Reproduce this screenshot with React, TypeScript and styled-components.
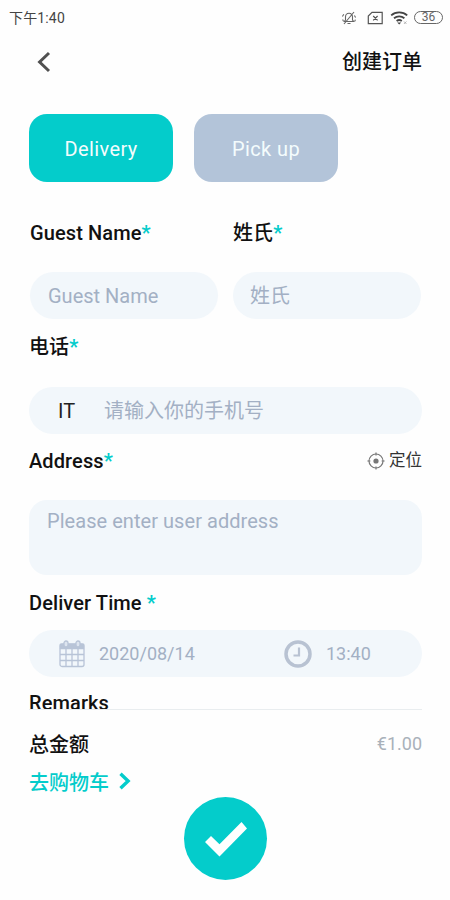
import React from "react";
import styled, { createGlobalStyle } from "styled-components";

const teal = "#04cccb";
const muted = "#a3b0c4";

const GlobalStyle = createGlobalStyle`
  * { box-sizing: border-box; }
  body {
    margin: 0;
    background: #fefefe;
    font-family: Roboto, "Noto Sans CJK SC", sans-serif;
    color: #111;
  }
`;

const Screen = styled.div`
  width: 450px;
  height: 900px;
  display: flex;
  flex-direction: column;
  overflow: hidden;
`;

const StatusBar = styled.div`
  height: 36px;
  display: flex;
  align-items: center;
  justify-content: space-between;
  padding: 0 7px 0 9px;
  font-size: 14px;
  color: #444;
`;

const StatusTime = styled.span`
  margin-top: -2px;
  letter-spacing: 0.15px;
`;

const StatusIcons = styled.div`
  display: flex;
  align-items: center;
  height: 18px;
  margin-top: -1px;
`;

const Glyph = styled.svg<{ $gap?: number }>`
  display: block;
  flex: none;
  margin-left: ${(p) => p.$gap ?? 0}px;
`;

const Battery = styled.span`
  width: 29px;
  height: 13px;
  margin-left: 5px;
  border: 1px solid #666;
  border-radius: 7px;
  font-size: 12px;
  line-height: 11px;
  text-align: center;
  color: #666;
`;

const Header = styled.header`
  height: 50px;
  display: flex;
  align-items: center;
  justify-content: space-between;
  padding: 2px 28px 0 36px;
`;

const Title = styled.h1`
  margin: 0;
  font-size: 20px;
  line-height: 30px;
  font-weight: 500;
`;

const Form = styled.main`
  height: 623px;
  flex: none;
  padding: 0 28px 0 29px;
  overflow: hidden;
`;

const Tabs = styled.div`
  display: flex;
  gap: 21px;
  padding-top: 27.5px;
`;

const Tab = styled.button<{ $active?: boolean }>`
  width: 144px;
  height: 68px;
  padding: 3px 0 0;
  border: 0;
  border-radius: 18px;
  background: ${(p) => (p.$active ? teal : "#b3c4d9")};
  color: #f4fcfd;
  font: 400 20px Roboto, sans-serif;
  letter-spacing: 0.4px;
`;

const NameRow = styled.div`
  display: grid;
  grid-template-columns: 188px 188px;
  column-gap: 15px;
  padding-left: 1px;
`;

const Label = styled.div<{ $top: number; $bottom: number }>`
  height: 30px;
  margin: ${(p) => p.$top}px 0 ${(p) => p.$bottom}px;
  font-size: 20px;
  line-height: 30px;
  font-weight: 500;
  white-space: nowrap;
  letter-spacing: 0.1px;
`;

const Star = styled.span`
  color: ${teal};
  font-weight: 700;
`;

const Field = styled.div<{ $pad?: number }>`
  height: 47px;
  display: flex;
  align-items: center;
  padding: 0 18px 0 ${(p) => p.$pad ?? 18}px;
  border-radius: 24px;
  background: #f2f7fb;
  color: ${muted};
  font-size: 20px;
  line-height: 30px;
  white-space: nowrap;
`;

const Country = styled.span`
  width: 46px;
  color: #222;
`;

const AddressBox = styled.div`
  height: 75px;
  padding: 6px 18px;
  border-radius: 18px;
  background: #f2f7fb;
  color: ${muted};
  font-size: 20px;
  line-height: 30px;
  letter-spacing: 0.05px;
`;

const LabelRow = styled.div`
  display: flex;
  align-items: flex-start;
  justify-content: space-between;
`;

const Locate = styled.div`
  display: flex;
  align-items: center;
  gap: 4px;
  height: 30px;
  margin-top: 12px;
  font-size: 16.5px;
  line-height: 24px;
  color: #333;
`;

const DateText = styled.span<{ $width: number }>`
  width: ${(p) => p.$width}px;
  margin-left: 14px;
  font-size: 18px;
`;

const Footer = styled.footer`
  flex: 1;
  margin: 0 28px 0 29px;
  border-top: 1px solid #e9edef;
  display: flex;
  flex-direction: column;
`;

const TotalRow = styled.div`
  display: flex;
  align-items: center;
  justify-content: space-between;
  height: 30px;
  margin-top: 18px;
  font-size: 20px;
  font-weight: 500;
`;

const Amount = styled.span`
  color: #a9b1ba;
  font-weight: 400;
  font-size: 18px;
`;

const CartLink = styled.a`
  display: flex;
  align-items: center;
  height: 30px;
  margin-top: 8px;
  margin-bottom: 1px;
  color: ${teal};
  font-size: 20px;
  font-weight: 500;
`;

const Submit = styled.button`
  width: 83px;
  height: 83px;
  margin: 0 0 0 155px;
  padding: 0;
  border: 0;
  border-radius: 50%;
  background: ${teal};
`;

const MuteIcon = () => (
  <Glyph width="16" height="16" viewBox="0 0 16 16" fill="none" stroke="#666" strokeWidth="1.1">
    <path d="M3.2 11.5h9.6L11.5 10V7c0-2.2-1.3-3.7-3.5-3.7S4.5 4.8 4.5 7v3zM6.5 13.5h3M13 2 3 14M2.8 4.2 1.4 6.5M1.6 9.5l.8 1.5M13.4 5.5l1.2 2M14.4 9.6l-.6 1.6" />
  </Glyph>
);

const NoSimIcon = () => (
  <Glyph $gap={10} width="17" height="14" viewBox="0 0 17 14" fill="none" stroke="#555" strokeWidth="1.2">
    <path d="M5 1.4h10.2v11.2H1.3V5zM6.2 5l4.4 4.4M10.6 5 6.2 9.4" />
  </Glyph>
);

const WifiIcon = () => (
  <Glyph $gap={6} width="19" height="16" viewBox="0 0 19 16" fill="none" stroke="#444" strokeWidth="1.8">
    <path d="M1.2 5.3c4.4-4 11.6-4 16 0M4 8.2c3-2.5 7.4-2.5 10.4 0M6.6 11c1.6-1.2 3.6-1.2 5.2 0" />
    <path d="m9.2 14.6-2-2.2h4z" fill="#444" stroke="none" />
    <path d="m14 11.5 2.4 2.4m0-2.4L14 13.9" stroke="#aaa" strokeWidth=".9" />
  </Glyph>
);

const BackIcon = () => (
  <Glyph width="16" height="22" viewBox="0 0 16 22" fill="none" stroke="#505050" strokeWidth="3">
    <path d="M13 2 3.6 11 13 20" />
  </Glyph>
);

const LocateIcon = () => (
  <Glyph width="18" height="18" viewBox="0 0 18 18" fill="none" stroke="#777" strokeWidth="1.2">
    <circle cx="9" cy="9" r="7" />
    <circle cx="9" cy="9" r="2.6" fill="#777" stroke="none" />
    <path d="M9 .4v3M9 14.6v3M.4 9h3M14.6 9h3" />
  </Glyph>
);

const CalendarIcon = () => (
  <Glyph width="26" height="28" viewBox="0 0 26 28" fill="none" stroke="#b8c4d7" strokeWidth="1.3">
    <rect x="1" y="4" width="24" height="22.5" rx="2" />
    <path d="M1.5 4.5h23v4h-23z" fill="#b8c4d7" />
    <path d="M1 14.5h24M1 20.5h24M7 9v17M13 9v17M19 9v17" />
    <rect x="5" y="1" width="4" height="6" rx="2" fill="#dce4ef" />
    <rect x="17" y="1" width="4" height="6" rx="2" fill="#dce4ef" />
  </Glyph>
);

const ClockIcon = () => (
  <Glyph width="28" height="28" viewBox="0 0 28 28" fill="none" stroke="#b8c2d2">
    <circle cx="14" cy="14" r="12" strokeWidth="3.5" />
    <path d="M15 7.5v8H9.5" strokeWidth="2.2" />
  </Glyph>
);

const CartArrow = () => (
  <Glyph $gap={9} width="14" height="18" viewBox="0 0 14 18" fill="none" stroke={teal} strokeWidth="3.4">
    <path d="m2.5 1.8 7.6 7.2-7.6 7.2" />
  </Glyph>
);

const CheckIcon = () => (
  <Glyph width="83" height="83" viewBox="0 0 83 83" fill="#fff">
    <path d="m21 45 6-6 8.5 8.3L57.5 25l5.5 6.5-27.5 28z" />
  </Glyph>
);

export default function App() {
  return (
    <>
      <GlobalStyle />
      <Screen>
        <StatusBar>
          <StatusTime>下午1:40</StatusTime>
          <StatusIcons>
            <MuteIcon />
            <NoSimIcon />
            <WifiIcon />
            <Battery>36</Battery>
          </StatusIcons>
        </StatusBar>
        <Header>
          <BackIcon />
          <Title>创建订单</Title>
        </Header>
        <Form>
          <Tabs>
            <Tab $active>Delivery</Tab>
            <Tab>Pick up</Tab>
          </Tabs>
          <NameRow>
            <Label $top={36} $bottom={24.5}>Guest Name<Star>*</Star></Label>
            <Label $top={36} $bottom={24.5}>姓氏<Star>*</Star></Label>
            <Field>Guest Name</Field>
            <Field $pad={17}>姓氏</Field>
          </NameRow>
          <Label $top={13} $bottom={25}>电话<Star>*</Star></Label>
          <Field $pad={29}>
            <Country>IT</Country>
            请输入你的手机号
          </Field>
          <LabelRow>
            <Label $top={12} $bottom={24}>Address<Star>*</Star></Label>
            <Locate>
              <LocateIcon />
              定位
            </Locate>
          </LabelRow>
          <AddressBox>Please enter user address</AddressBox>
          <Label $top={13} $bottom={12}>Deliver Time <Star>*</Star></Label>
          <Field $pad={30}>
            <CalendarIcon />
            <DateText $width={185}>2020/08/14</DateText>
            <ClockIcon />
            <DateText $width={60}>13:40</DateText>
          </Field>
          <Label $top={11} $bottom={0}>Remarks</Label>
        </Form>
        <Footer>
          <TotalRow>
            总金额
            <Amount>€1.00</Amount>
          </TotalRow>
          <CartLink>
            去购物车
            <CartArrow />
          </CartLink>
          <Submit aria-label="Submit">
            <CheckIcon />
          </Submit>
        </Footer>
      </Screen>
    </>
  );
}
